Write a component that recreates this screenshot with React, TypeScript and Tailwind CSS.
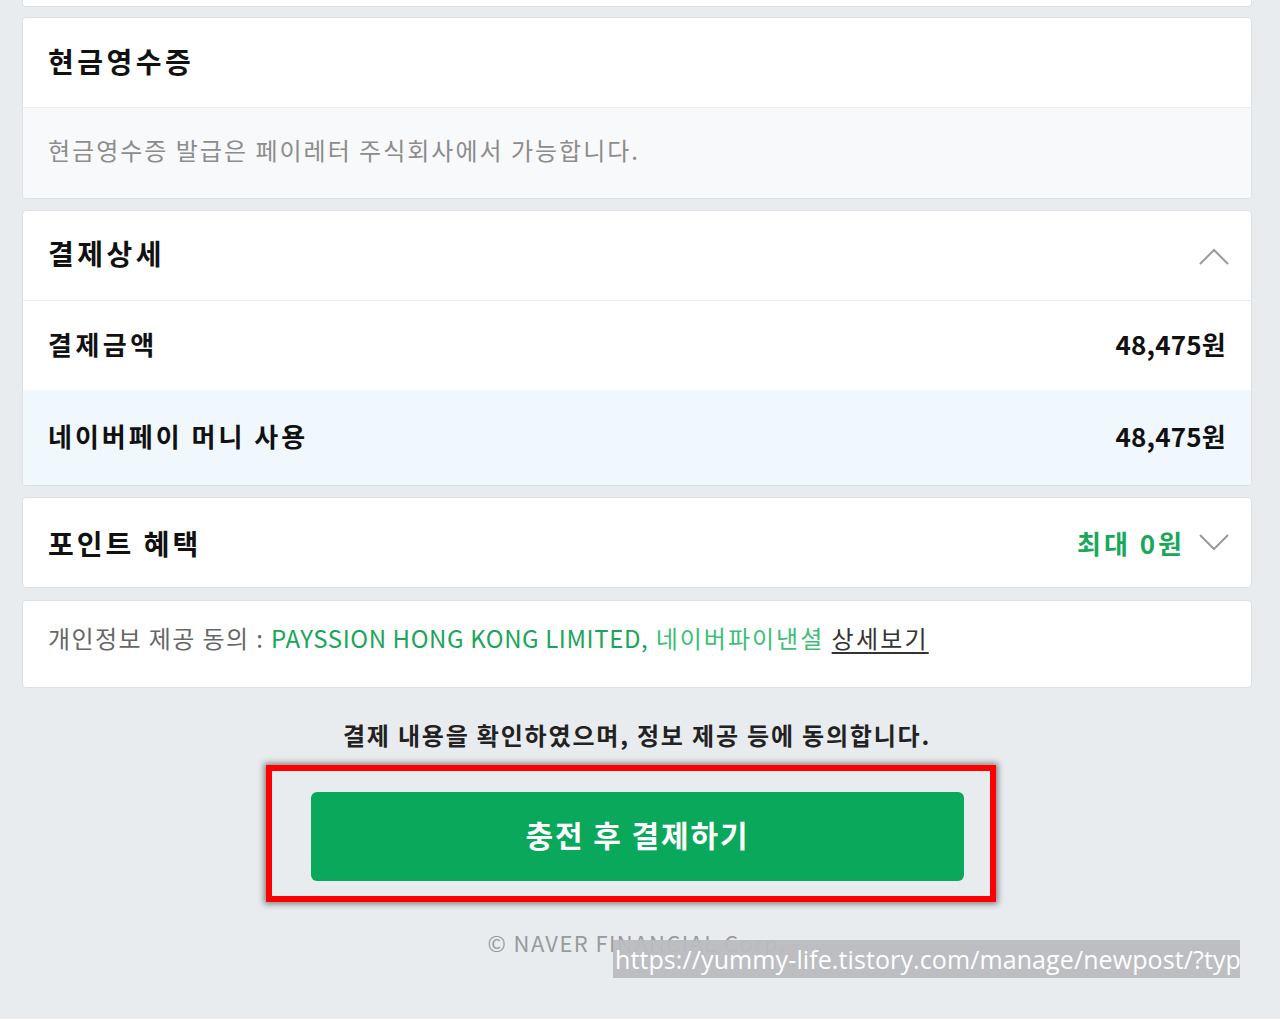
const FONT = { fontFamily: '"Noto Sans CJK KR", "Noto Sans", sans-serif' };

const Chevron = ({ up }: { up?: boolean }) => (
  <svg width="30" height="18" viewBox="0 0 30 18" fill="none" className="shrink-0">
    <polyline
      points={up ? '1,17 15,3 29,17' : '1,1 15,15 29,1'}
      stroke="#9a9a9a"
      strokeWidth="2"
    />
  </svg>
);

const App = () => {
  return (
    <div className="relative min-h-[1019px] overflow-hidden bg-[#e9ecef] pl-[22px] pr-[28px]" style={FONT}>
      {/* end of previous card */}
      <div className="h-[7px] rounded-b border-x border-b border-[#dcdfe3] bg-white"></div>

      <section className="mt-[10px] overflow-hidden rounded border border-[#dcdfe3] bg-white">
        <div className="flex h-[90px] items-center border-b border-[#eceef0] px-[25px] pb-[4px] text-[28px] font-bold tracking-[3.5px] text-[#111]">
          현금영수증
        </div>
        <div className="flex h-[90px] items-center bg-[#f8f9fa] px-[25px] pb-[6px] text-[24px] tracking-[2px] text-[#8c8c8c]">
          현금영수증 발급은 페이레터 주식회사에서 가능합니다.
        </div>
      </section>

      <section className="mt-[11px] overflow-hidden rounded border border-[#dcdfe3] bg-white">
        <div className="flex h-[90px] items-center justify-between border-b border-[#eceef0] pl-[25px] pr-[22px] text-[28px] font-bold text-[#111]">
          <span className="pb-[6px] tracking-[3.5px]">결제상세</span>
          <Chevron up />
        </div>
        <div className="flex h-[89px] items-center justify-between px-[25px] pb-[4px] text-[26px] font-bold text-[#111]">
          <span className="tracking-[3.5px]">결제금액</span>
          <span className="tracking-[0.2px]">48,475원</span>
        </div>
        <div className="flex h-[95px] items-center justify-between bg-[#f0f8fe] px-[25px] pb-[4px] text-[26px] font-bold text-[#111]">
          <span className="tracking-[3px]">네이버페이 머니 사용</span>
          <span className="tracking-[0.2px]">48,475원</span>
        </div>
      </section>

      <section className="mt-[11px] flex h-[91px] items-center justify-between rounded border border-[#dcdfe3] bg-white pl-[25px] pr-[22px]">
        <span className="text-[28px] font-bold tracking-[3px] text-[#111]">포인트 혜택</span>
        <div className="flex items-center gap-[14px]">
          <span className="text-[26px] font-bold tracking-[3px] text-[#19a85a]">최대 0원</span>
          <Chevron />
        </div>
      </section>

      <section className="mt-[12px] flex h-[88px] items-center whitespace-nowrap rounded border border-[#dcdfe3] bg-white px-[25px] pb-[12px] text-[24px] text-[#666]">
        <span className="tracking-[1.4px]">개인정보 제공 동의 :&nbsp;</span>
        <span className="tracking-[0.6px] text-[#1ba55a]">PAYSSION HONG KONG LIMITED,</span>
        <span className="tracking-[2px] text-[#3cbf76]">&nbsp;네이버파이낸셜&nbsp;</span>
        <span className="tracking-[2.2px] text-[#333] underline underline-offset-4">상세보기</span>
      </section>

      <p className="mt-[30px] text-center text-[24px] font-bold leading-[34px] tracking-[1.8px] text-[#222]">
        결제 내용을 확인하였으며, 정보 제공 등에 동의합니다.
      </p>

      <div className="ml-[244px] mt-[13px] w-[730px] border-[6px] border-[#ff0000] pb-[15px] pl-[39px] pr-[26px] pt-[21px] shadow-[0_0_6px_2px_rgba(0,0,0,0.45)]">
        <button className="flex h-[89px] w-[653px] items-center justify-center rounded-[6px] bg-[#0aa85a] pb-[4px] text-[30px] font-bold tracking-[1.9px] text-white">
          충전 후 결제하기
        </button>
      </div>

      <p className="mt-[25px] text-center text-[22px] leading-[30px] tracking-[1.4px] text-[#9a9a9a]">
        © NAVER FINANCIAL Corp.
      </p>

      {/* browser url tooltip */}
      <div className="absolute left-[613px] top-[940px] flex h-[38px] w-[627px] items-center overflow-hidden whitespace-nowrap bg-[#b9bcbf]/95 pl-[2px] text-[25px] leading-none tracking-[0.1px] text-white" style={{ fontFamily: '"Open Sans", "Noto Sans", sans-serif' }}>
        https://yummy-life.tistory.com/manage/newpost/?typ
      </div>
    </div>
  );
};

export default App;
